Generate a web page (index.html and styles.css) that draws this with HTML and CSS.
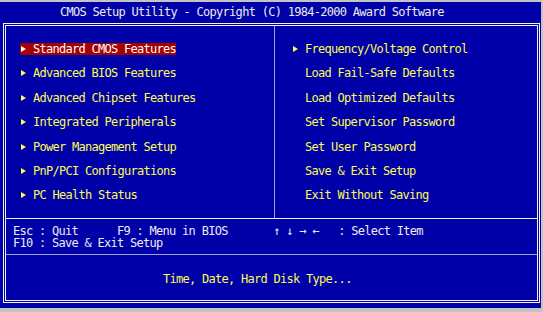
FILE: index.html
```html
<!DOCTYPE html>
<html lang="en">
<head>
	<meta charset="UTF-8">
	<title>CMOS Setup Utility</title>
	<link rel="stylesheet" href="styles.css">
</head>
<body>
	<div class="screen">
		<div class="title">CMOS Setup Utility - Copyright (C) 1984-2000 Award Software</div>
		<div class="frame">
			<div class="menu">
				<ul class="col left">
					<li><span class="item active"><i class="arrow"></i>Standard CMOS Features</span></li>
					<li><span class="item"><i class="arrow"></i>Advanced BIOS Features</span></li>
					<li><span class="item"><i class="arrow"></i>Advanced Chipset Features</span></li>
					<li><span class="item"><i class="arrow"></i>Integrated Peripherals</span></li>
					<li><span class="item"><i class="arrow"></i>Power Management Setup</span></li>
					<li><span class="item"><i class="arrow"></i>PnP/PCI Configurations</span></li>
					<li><span class="item"><i class="arrow"></i>PC Health Status</span></li>
				</ul>
				<ul class="col right">
					<li><span class="item"><i class="arrow"></i>Frequency/Voltage Control</span></li>
					<li><span class="item"><i class="blank"></i>Load Fail-Safe Defaults</span></li>
					<li><span class="item"><i class="blank"></i>Load Optimized Defaults</span></li>
					<li><span class="item"><i class="blank"></i>Set Supervisor Password</span></li>
					<li><span class="item"><i class="blank"></i>Set User Password</span></li>
					<li><span class="item"><i class="blank"></i>Save &amp; Exit Setup</span></li>
					<li><span class="item"><i class="blank"></i>Exit Without Saving</span></li>
				</ul>
			</div>
			<div class="keys">Esc : Quit      F9 : Menu in BIOS       ↑ ↓ → ←   : Select Item
F10 : Save &amp; Exit Setup</div>
			<div class="hint">Time, Date, Hard Disk Type...</div>
		</div>
	</div>
</body>
</html>
```

FILE: styles.css
```css
*{margin:0;padding:0;box-sizing:border-box;}
body{background:#c4c4c4;width:543px;height:312px;overflow:hidden;}
.screen{width:541px;height:306px;margin-top:2px;background:#0000a8;color:#ececec;font-family:"DejaVu Sans Mono","Liberation Mono",monospace;font-size:12px;letter-spacing:-0.72px;padding-left:3px;}
.title{height:21px;line-height:21px;padding-left:57px;white-space:pre;}
.frame{width:537px;height:280px;border:3px double #f4f4f4;}
.menu{display:flex;height:193px;border-bottom:1px solid #f4f4f4;}
.col{list-style:none;display:flex;flex-direction:column;gap:12.4px;padding-top:17px;}
.col.left{width:269px;border-right:1px solid #a0a0d0;padding-left:14px;}
.col.right{flex:1;padding-left:17px;}
.col li{height:12px;line-height:12px;}
.item{display:inline-block;height:12px;color:#fcfc54;white-space:pre;}
.item.active{background:#a80000;color:#fcfcfc;}
.arrow,.blank{display:inline-block;width:13px;height:12px;vertical-align:top;position:relative;}
.arrow:before{content:"";position:absolute;left:1px;top:3px;border-left:5px solid currentColor;border-top:3px solid transparent;border-bottom:3px solid transparent;}
.keys{height:36px;border-bottom:1px solid #a0a0d0;padding:6px 0 0 7px;line-height:12px;white-space:pre;}
.hint{padding:18px 0 0 157px;line-height:12px;color:#fcfc54;white-space:pre;}
```
